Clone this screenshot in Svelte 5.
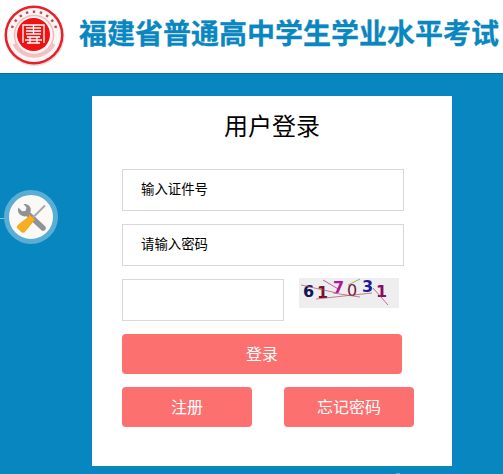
<script>
  let idNo = $state("")
  let password = $state("")
  let code = $state("")
</script>

<div class="page">
  <header class="top">
    <svg class="logo" viewBox="0 0 62 62" aria-hidden="true">
      <circle cx="31.500" cy="32" r="30" fill="#d6d6d6" opacity="0.7" />
      <circle cx="31" cy="31" r="29.500" fill="#e8202a" />
      <circle cx="31" cy="31" r="27" fill="#fdf6f6" />
      <path d="M9 24a23 23 0 0 1 44 0" fill="none" stroke="#c8474c" stroke-width="2.400" stroke-dasharray="2.400 4.600" />
      <path d="M11 40a22.500 22.500 0 0 0 40 0" fill="none" stroke="#f0c4c4" stroke-width="3" />
      <circle cx="31" cy="31" r="19.500" fill="none" stroke="#f3bcbc" stroke-width="1.600" />
      <circle cx="30.500" cy="30.500" r="16.500" fill="#ee1212" />
      <g fill="none" stroke="#fff" stroke-width="1.300">
        <path d="M20 39V21h21v18" />
        <path d="M23 24h15M23 27h15M23 30h15M30.500 21v9M24 33h13M22 36h17M24 39h13M27 33v6M34 33v6" />
      </g>
    </svg>
    <h1>福建省普通高中学生学业水平考试</h1>
  </header>

  <main class="band">
    <span class="rule"></span>
    <button class="tool" aria-label="工具">
      <svg viewBox="0 0 34 34" width="34" height="34" aria-hidden="true">
        <path d="M14 14L29 28" stroke="#8f9396" stroke-width="5.500" stroke-linecap="round" />
        <path d="M4.500 7.500a6.500 6.500 0 0 0 10 7.500 6.500 6.500 0 0 0 .5-9.500c-1.500-1.300-3.500-1.800-5.500-1.500l3 3.500-1 3.500-3.500 .3z" fill="#8f9396" />
        <path d="M31 5.500L18 18.500" stroke="#a6aaac" stroke-width="2" />
        <path d="M15.500 14.500l5.500 5.500-2 1.500-8 10c-1.200 1-2.800 1-4 0l-3-3c-.8-1.200-.8-2.500 .3-3.600L14 17.500z" fill="#f8ae1e" stroke="#e6930f" stroke-width="0.600" />
      </svg>
    </button>

    <form class="card" onsubmit={(e) => e.preventDefault()}>
      <h2>用户登录</h2>
      <input class="field" placeholder="输入证件号" bind:value={idNo} />
      <input class="field" type="text" placeholder="请输入密码" bind:value={password} />
      <div class="code-row">
        <input class="field code" bind:value={code} />
        <svg class="captcha" viewBox="0 0 100 30" aria-label="验证码">
          <rect width="100" height="30" fill="#eeeeee" />
          <g font-family="DejaVu Sans, sans-serif" font-size="16" font-weight="bold">
            <text x="4" y="19" fill="#14145a">6</text>
            <text x="18" y="20" fill="#7a1030">1</text>
            <text x="34" y="15" fill="#b0189a">7</text>
            <text x="48" y="18" fill="#6b1a40" font-weight="normal">0</text>
            <text x="63" y="14" fill="#1c1c9a">3</text>
            <text x="77" y="19" fill="#880e62">1</text>
          </g>
          <g fill="none" stroke-width="0.700">
            <path d="M2 7l36 8" stroke="#a8506a" />
            <path d="M17 21l56-6" stroke="#a8506a" />
            <path d="M34 15l27 4" stroke="#a8506a" />
            <path d="M24 2l17 10" stroke="#b0189a" />
            <path d="M49 7l12-6" stroke="#5a9a5a" />
            <path d="M74 10l15 17" stroke="#c0287a" />
          </g>
        </svg>
      </div>
      <button class="btn wide" type="submit">登录</button>
      <div class="btn-row">
        <button class="btn half" type="button">注册</button>
        <button class="btn half" type="button">忘记密码</button>
      </div>
    </form>
    <span class="dot"></span>
  </main>
</div>

<style>
  :global(body) {
    margin: 0;
    overflow: hidden;
  }
  .page {
    width: 503px;
    height: 474px;
    font-family: "Liberation Sans", "Noto Sans CJK SC", sans-serif;
    overflow: hidden;
  }
  .top {
    height: 73px;
    box-sizing: border-box;
    background: #fff;
    display: flex;
    align-items: flex-start;
    padding: 4px 0 0 3px;
  }
  .logo {
    width: 62px;
    height: 62px;
    flex: none;
  }
  h1 {
    margin: 11px 0 0 14px;
    font-size: 28px;
    line-height: 40px;
    font-weight: bold;
    color: #0a87c0;
    white-space: nowrap;
    -webkit-text-stroke: 0.3px #0a87c0;
  }
  .band {
    position: relative;
    height: 401px;
    background: #0786c0;
    border-top: 1px solid #0b6f9e;
    box-sizing: border-box;
    padding: 22px 0 0 92px;
  }
  .rule {
    position: absolute;
    left: 0;
    top: 144px;
    width: 5px;
    height: 1px;
    background: #7fc0de;
  }
  .dot {
    position: absolute;
    left: 396px;
    bottom: 0;
    width: 4px;
    height: 1px;
    background: #5cadd3;
  }
  .tool {
    position: absolute;
    left: 4px;
    top: 116px;
    width: 54px;
    height: 54px;
    box-sizing: border-box;
    padding: 0;
    border: 5px solid #5cadd3;
    border-radius: 50%;
    background: #faf9f5;
    display: flex;
    align-items: center;
    justify-content: center;
  }
  .card {
    width: 360px;
    height: 370px;
    box-sizing: border-box;
    background: #fff;
    padding: 0 30px;
  }
  h2 {
    margin: 0;
    padding-top: 16px;
    height: 73px;
    box-sizing: border-box;
    font-size: 24px;
    line-height: 30px;
    font-weight: normal;
    color: #000;
    text-align: center;
  }
  .field {
    display: block;
    width: 282px;
    height: 42px;
    box-sizing: border-box;
    border: 1px solid #d8d8d8;
    padding: 0 18px 2px;
    margin-bottom: 13px;
    font: 13.4px "Liberation Sans", "Noto Sans CJK SC", sans-serif;
    color: #000;
    outline: none;
  }
  .field::placeholder {
    color: #000;
    opacity: 1;
  }
  .code-row {
    display: flex;
    align-items: flex-start;
    gap: 15px;
  }
  .code {
    width: 162px;
  }
  .captcha {
    width: 100px;
    height: 30px;
    margin-top: -1px;
  }
  .btn {
    border: none;
    border-radius: 4px;
    background: #fc7070;
    color: #fff;
    font: 16px "Liberation Sans", "Noto Sans CJK SC", sans-serif;
    padding: 0 0 2px;
  }
  .wide {
    display: block;
    width: 280px;
    height: 40px;
  }
  .btn-row {
    display: flex;
    gap: 32px;
    margin-top: 13px;
    width: 292px;
  }
  .half {
    flex: none;
    width: 130px;
    height: 40px;
  }
</style>
